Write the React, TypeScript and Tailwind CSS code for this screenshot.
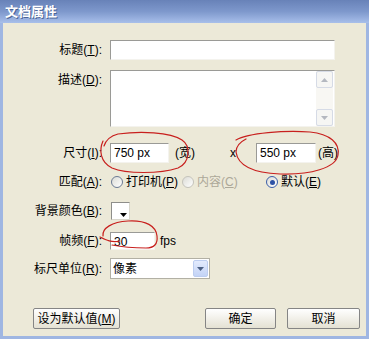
import React from "react";

const font = "font-['Liberation_Sans','Noto_Sans_CJK_SC',sans-serif]";

// --- Small pieces --------------------------------------------------

function Label({ text, k }: { text: string; k: string }) {
  return (
    <div className="w-[100px] shrink-0 text-right pr-[1px] text-[12px] leading-[20px] text-black">
      {text}(<u>{k}</u>):
    </div>
  );
}

function TextBox({
  value,
  className = "",
}: {
  value?: string;
  className?: string;
}) {
  return (
    <div
      className={`bg-white border border-t-[#9a9a96] border-l-[#9a9a96] border-b-[#f4f3ee] border-r-[#f4f3ee] text-[12px] leading-[18px] pl-[3px] text-black ${className}`}
    >
      {value}
    </div>
  );
}

function Radio({ checked, disabled }: { checked?: boolean; disabled?: boolean }) {
  return (
    <span
      className={`w-[12px] h-[12px] rounded-full border flex items-center justify-center bg-gradient-to-br from-[#dcdcd6] to-white ${
        disabled ? "border-[#c4c3bb]" : checked ? "border-[#3b5ea8]" : "border-[#6b7a93]"
      }`}
    >
      {checked && <span className="w-[5px] h-[5px] rounded-full bg-[#2d52a6]" />}
    </span>
  );
}

function Arrow({ up, color }: { up?: boolean; color: string }) {
  return (
    <svg width="7" height="4" viewBox="0 0 7 4">
      <path d={up ? "M0 4 L3.5 0 L7 4 Z" : "M0 0 L3.5 4 L7 0 Z"} fill={color} />
    </svg>
  );
}

function Button({ children, className = "" }: { children: React.ReactNode; className?: string }) {
  return (
    <div
      className={`h-[21px] flex items-center justify-center rounded-[2px] border border-[#858585] bg-gradient-to-b from-white to-[#e4e1d3] text-[12px] text-black ${className}`}
    >
      {children}
    </div>
  );
}

// --- Hand-drawn red marks ------------------------------------------

function RedMarks() {
  return (
    <svg
      className="absolute left-0 top-0 pointer-events-none"
      width="369"
      height="339"
      viewBox="0 0 369 339"
      fill="none"
      stroke="#c8201e"
      strokeWidth="1.2"
      strokeLinecap="round"
    >
      <path d="M103 141 C99 150 100 162 112 168 C126 174 160 174 178 168 C190 163 191 146 182 140 C170 132 140 131 118 134 C110 136 106 140 104 146" />
      <path d="M236 140 C248 133 285 130 310 132 C330 134 340 143 338 155 C336 168 310 175 280 174 C255 173 238 166 236 152 C236 146 240 142 246 139" />
      <path d="M100 237 C106 240 112 243 120 241 M103 236 C102 228 112 222 128 221 C146 220 156 226 157 236 C158 244 154 248 146 248 C134 248 122 247 112 245" />
    </svg>
  );
}

// --- Dialog --------------------------------------------------------

export default function App() {
  return (
    <div className={`relative w-[369px] h-[339px] flex flex-col ${font}`}>
      {/* Title bar */}
      <div className="h-[23px] shrink-0 bg-gradient-to-b from-[#6882b8] via-[#7e98cc] to-[#a8bfea] flex items-center pl-[5px]">
        <span className="text-white text-[13px] font-bold tracking-[0px] [text-shadow:1px_1px_0_#4a6496]">
          文档属性
        </span>
      </div>

      {/* Body */}
      <div className="flex-1 flex flex-col bg-[#ece9d8] border-x-[3px] border-b-[3px] border-[#9fb6e2]">
        {/* 标题 */}
        <div className="flex mt-[17px] h-[20px]">
          <Label text="标题" k="T" />
          <TextBox className="ml-[7px] w-[225px] h-[20px]" />
        </div>

        {/* 描述 */}
        <div className="flex mt-[10px] h-[57px]">
          <div className="pt-[-2px]">
            <Label text="描述" k="D" />
          </div>
          <div className="ml-[7px] w-[225px] h-[57px] bg-white border border-t-[#9a9a96] border-l-[#9a9a96] border-b-[#f4f3ee] border-r-[#f4f3ee] flex justify-end pr-[1px]">
            <div className="w-[17px] h-full flex flex-col bg-[#f8f7f3]">
              <div className="h-[17px] border border-[#d6dbe6] rounded-[2px] bg-[#f6f6f4] flex items-center justify-center">
                <Arrow up color="#b4b8c0" />
              </div>
              <div className="flex-1" />
              <div className="h-[17px] border border-[#d6dbe6] rounded-[2px] bg-[#f6f6f4] flex items-center justify-center">
                <Arrow color="#b4b8c0" />
              </div>
            </div>
          </div>
        </div>

        {/* 尺寸 */}
        <div className="flex items-center mt-[16px] h-[20px] text-[12px]">
          <Label text="尺寸" k="I" />
          <TextBox value="750 px" className="ml-[7px] w-[59px] h-[20px]" />
          <span className="ml-[6px]">(宽)</span>
          <span className="ml-[35px]">x</span>
          <TextBox value="550 px" className="ml-[20px] w-[60px] h-[20px]" />
          <span className="ml-[2px]">(高)</span>
        </div>

        {/* 匹配 */}
        <div className="flex items-center mt-[9px] h-[20px] text-[12px]">
          <Label text="匹配" k="A" />
          <div className="ml-[8px] w-[71px] flex items-center gap-[3px]">
            <Radio />
            <span>
              打印机(<u>P</u>)
            </span>
          </div>
          <div className="w-[84px] flex items-center gap-[3px] text-[#aca899]">
            <Radio disabled />
            <span>
              内容(<u>C</u>)
            </span>
          </div>
          <div className="flex items-center gap-[3px]">
            <Radio checked />
            <span>
              默认(<u>E</u>)
            </span>
          </div>
        </div>

        {/* 背景颜色 */}
        <div className="flex items-center mt-[9px] h-[20px]">
          <Label text="背景颜色" k="B" />
          <div className="relative ml-[8px] w-[19px] h-[18px] bg-white border border-t-[#8e8e8a] border-l-[#8e8e8a] border-b-[#d8d6ca] border-r-[#d8d6ca]">
            <span className="absolute right-[2px] bottom-[2px]">
              <Arrow color="#000" />
            </span>
          </div>
        </div>

        {/* 帧频 */}
        <div className="flex items-center mt-[11px] h-[18px] text-[12px]">
          <Label text="帧频" k="F" />
          <TextBox value="30" className="ml-[7px] w-[45px] h-[18px] leading-[16px]" />
          <span className="ml-[5px]">fps</span>
        </div>

        {/* 标尺单位 */}
        <div className="flex items-center mt-[8px] h-[21px] text-[12px]">
          <Label text="标尺单位" k="R" />
          <div className="ml-[7px] w-[100px] h-[21px] bg-white border border-[#b2b0a4] flex items-center justify-between pl-[2px] pr-[1px]">
            <span>像素</span>
            <div className="w-[15px] h-[17px] rounded-[2px] border border-[#bccdf0] bg-gradient-to-b from-[#e3ebfd] to-[#c3d3f6] flex items-center justify-center">
              <Arrow color="#4d6185" />
            </div>
          </div>
        </div>

        {/* Buttons */}
        <div className="flex items-center mt-[29px] h-[21px]">
          <Button className="ml-[30px] w-[87px]">
            设为默认值(<u>M</u>)
          </Button>
          <Button className="ml-auto w-[71px]">确定</Button>
          <Button className="ml-[11px] mr-[6px] w-[73px]">取消</Button>
        </div>
      </div>

      <RedMarks />
    </div>
  );
}
